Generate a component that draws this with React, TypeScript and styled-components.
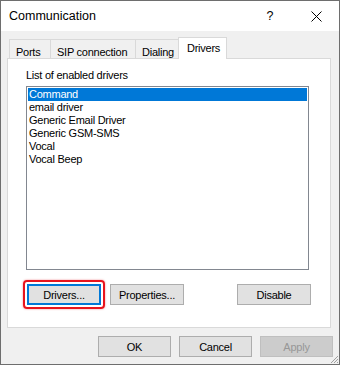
import { FC, useState } from 'react';
import styled, { createGlobalStyle } from 'styled-components';

const GlobalStyle = createGlobalStyle`
  html, body {
    margin: 0;
    padding: 0;
    background: #ffffff;
  }
  * {
    box-sizing: border-box;
  }
`;

const uiFont = `font-family: 'Liberation Sans', Arial, sans-serif; font-size: 11px; letter-spacing: -0.25px;`;

const Window = styled.div`
  position: relative;
  width: 340px;
  height: 365px;
  border: 1px solid #6e6e6e;
  display: flex;
  flex-direction: column;
  background: #f0f0f0;
  color: #000;
  ${uiFont}
`;

const TitleBar = styled.div`
  height: 30px;
  flex: 0 0 auto;
  background: #ffffff;
  display: flex;
  align-items: stretch;
`;

const Title = styled.div`
  flex: 1;
  padding-left: 8px;
  line-height: 30px;
  font-size: 12.5px;
  letter-spacing: 0;
`;

const CaptionButton = styled.div`
  width: 46px;
  display: flex;
  align-items: center;
  justify-content: center;
  font-size: 12.5px;
  letter-spacing: 0;
`;

const Body = styled.div`
  flex: 1;
  display: flex;
  flex-direction: column;
  padding: 6px 7px 0 6px;
`;

const TabRow = styled.div`
  display: flex;
  align-items: flex-end;
  height: 22px;
  margin-left: 2px;
`;

const Tab = styled.div<{ $active?: boolean; $w: number }>`
  width: ${(p) => p.$w}px;
  height: ${(p) => (p.$active ? 22 : 20)}px;
  margin-left: -1px;
  &:first-child {
    margin-left: 0;
  }
  padding: ${(p) => (p.$active ? '4px 0 0 8px' : '6px 0 0 6px')};
  line-height: 13px;
  white-space: nowrap;
  border: 1px solid #d9d9d9;
  border-bottom: none;
  background: ${(p) => (p.$active ? '#ffffff' : '#f0f0f0')};
  position: relative;
  z-index: ${(p) => (p.$active ? 2 : 0)};
  cursor: default;
`;

const Panel = styled.div`
  margin-top: -1px;
  margin-right: 1px;
  background: #ffffff;
  border: 1px solid #d9d9d9;
  padding: 10px 21px 22px 18px;
  display: flex;
  flex-direction: column;
  position: relative;
  z-index: 1;
`;

const Label = styled.div`
  line-height: 13px;
`;

const ListBox = styled.div`
  margin-top: 4px;
  height: 184px;
  border: 1px solid #828790;
  padding: 1px;
  display: flex;
  flex-direction: column;
`;

const ListItem = styled.div<{ $selected?: boolean }>`
  height: 13px;
  line-height: 13px;
  padding-left: 1px;
  background: ${(p) => (p.$selected ? '#0078d7' : 'transparent')};
  color: ${(p) => (p.$selected ? '#ffffff' : '#000000')};
  cursor: default;
`;

const ButtonRow = styled.div`
  margin: 14px -2px 0 1px;
  display: flex;
  gap: 9px;
`;

const Button = styled.button<{ $focused?: boolean; $w?: number }>`
  ${uiFont}
  width: ${(p) => p.$w ?? 74}px;
  height: 21px;
  padding: 0;
  background: #e1e1e1;
  border: ${(p) => (p.$focused ? '2px solid #0078d7' : '1px solid #adadad')};
  color: #000;
  &:disabled {
    background: #cccccc;
    border-color: #bfbfbf;
    color: #979797;
  }
`;

const Spacer = styled.div`
  flex: 1;
`;

const Highlight = styled.div`
  position: relative;
  display: flex;
`;

const RedRing = styled.div`
  position: absolute;
  inset: -4px;
  border: 2px solid #e8141d;
  border-radius: 4px;
  box-shadow: 0 0 2px rgba(232, 20, 29, 0.55);
  pointer-events: none;
`;

const Footer = styled.div`
  margin-top: 8px;
  margin-right: -1px;
  display: flex;
  justify-content: flex-end;
  gap: 8px;
`;

const SizeGrip = styled.svg`
  position: absolute;
  right: 0;
  bottom: 0;
`;

const drivers = ['Command', 'email driver', 'Generic Email Driver', 'Generic GSM-SMS', 'Vocal', 'Vocal Beep'];

const tabs = [
  { name: 'Ports', w: 42 },
  { name: 'SIP connection', w: 86 },
  { name: 'Dialing', w: 44 },
  { name: 'Drivers', w: 49 },
];

const App: FC = () => {
  const [selected, setSelected] = useState(0);

  return (
    <>
      <GlobalStyle />
      <Window>
        <TitleBar>
          <Title>Communication</Title>
          <CaptionButton>?</CaptionButton>
          <CaptionButton>
            <svg width='11' height='11' viewBox='0 0 11 11'>
              <path d='M0.5 0.5 L10.5 10.5 M10.5 0.5 L0.5 10.5' stroke='#000' strokeWidth='1' />
            </svg>
          </CaptionButton>
        </TitleBar>
        <Body>
          <TabRow>
            {tabs.map((t) => (
              <Tab key={t.name} $w={t.w} $active={t.name === 'Drivers'}>
                {t.name}
              </Tab>
            ))}
          </TabRow>
          <Panel>
            <Label>List of enabled drivers</Label>
            <ListBox>
              {drivers.map((d, i) => (
                <ListItem key={d} $selected={i === selected} onClick={() => setSelected(i)}>
                  {d}
                </ListItem>
              ))}
            </ListBox>
            <ButtonRow>
              <Highlight>
                <Button $focused>Drivers...</Button>
                <RedRing />
              </Highlight>
              <Button>Properties...</Button>
              <Spacer />
              <Button>Disable</Button>
            </ButtonRow>
          </Panel>
          <Footer>
            <Button $w={73}>OK</Button>
            <Button $w={73}>Cancel</Button>
            <Button $w={73} disabled>
              Apply
            </Button>
          </Footer>
        </Body>
        <SizeGrip width='10' height='10' viewBox='0 0 10 10'>
          <path d='M9 2 L2 9 M9 5 L5 9 M9 8 L8 9' stroke='#a0a0a0' strokeWidth='1' />
        </SizeGrip>
      </Window>
    </>
  );
};

export default App;
